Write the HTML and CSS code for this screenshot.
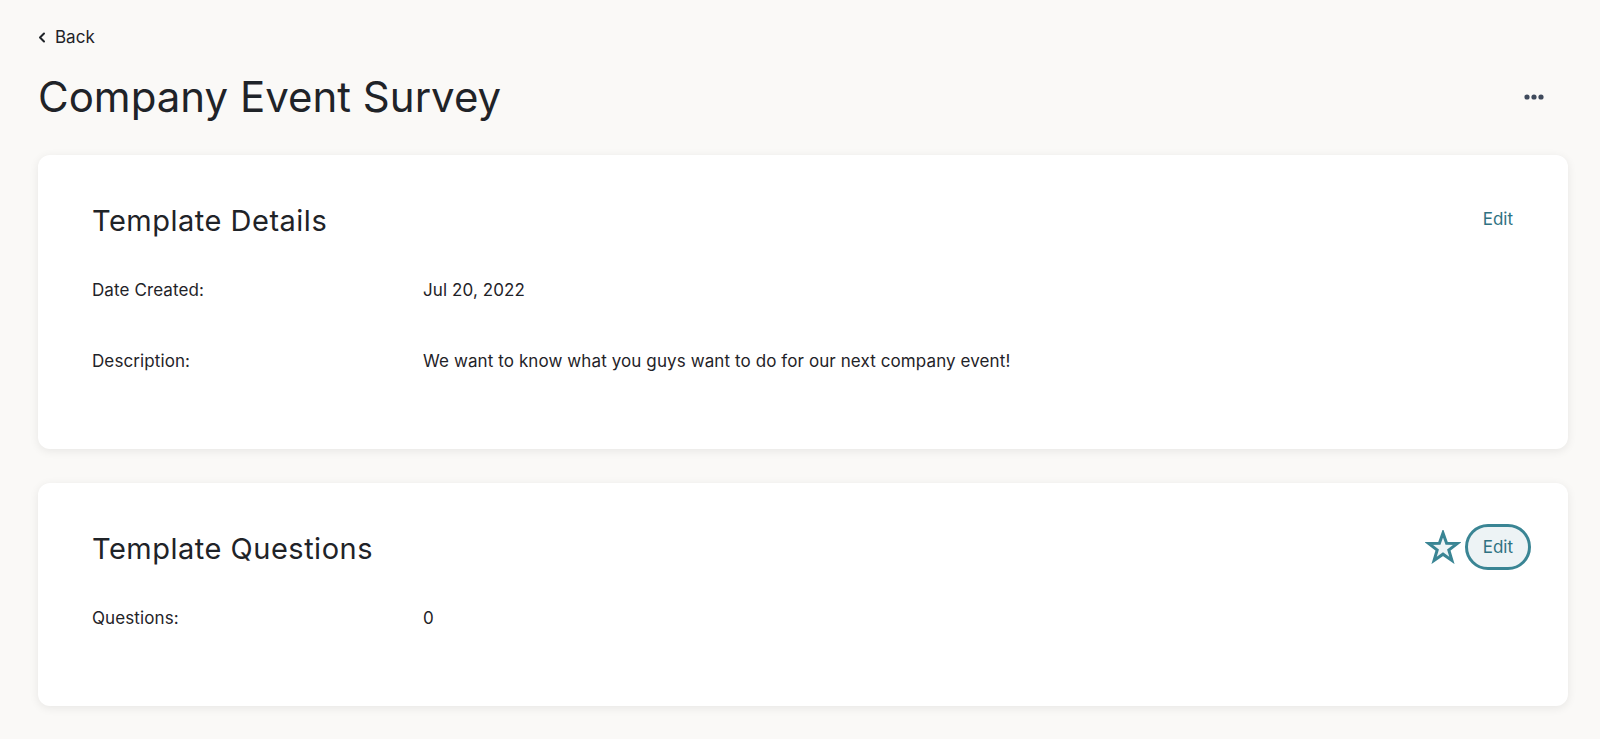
FILE: index.html
```html
<!DOCTYPE html>
<html lang="en">
<head>
  <meta charset="UTF-8" />
  <meta name="viewport" content="width=device-width, initial-scale=1.0"/>
  <title>Company Event Survey</title>
  <link rel="stylesheet" href="styles.css">
</head>
<body>
  <div class="page">
    <a class="back" href="#">
      <svg width="8" height="11" viewBox="0 0 8 11"><path d="M6 1.5 L2 5.5 L6 9.5" fill="none" stroke="#1f2328" stroke-width="2" stroke-linecap="round" stroke-linejoin="round"/></svg>
      Back
    </a>

    <div class="page-head">
      <h1>Company Event Survey</h1>
      <button class="more" aria-label="More">
        <svg width="20" height="6" viewBox="0 0 20 6">
          <circle cx="3" cy="3" r="2.6" fill="#3f4a5c"/>
          <circle cx="10" cy="3" r="2.6" fill="#3f4a5c"/>
          <circle cx="17" cy="3" r="2.6" fill="#3f4a5c"/>
        </svg>
      </button>
    </div>

    <section class="card">
      <div class="card-head">
        <h2>Template Details</h2>
        <div class="actions">
          <button class="edit">Edit</button>
        </div>
      </div>
      <div class="fields">
        <div class="field">
          <span class="label">Date Created:</span>
          <span class="value">Jul 20, 2022</span>
        </div>
        <div class="field">
          <span class="label">Description:</span>
          <span class="value">We want to know what you guys want to do for our next company event!</span>
        </div>
      </div>
    </section>

    <section class="card">
      <div class="card-head">
        <h2>Template Questions</h2>
        <div class="actions">
          <svg class="star" width="36" height="34" viewBox="0 0 36 34">
            <path d="M18 3 L21.6 13.2 L32.4 13.4 L23.8 20 L26.9 30.4 L18 24.2 L9.1 30.4 L12.2 20 L3.6 13.4 L14.4 13.2 Z" fill="#eef4f6" stroke="#3a8594" stroke-width="3" stroke-linejoin="miter"/>
          </svg>
          <button class="edit focused">Edit</button>
        </div>
      </div>
      <div class="fields">
        <div class="field">
          <span class="label">Questions:</span>
          <span class="value">0</span>
        </div>
      </div>
    </section>
  </div>
</body>
</html>
```

FILE: styles.css
```css
body {
  margin: 0;
  background: #faf9f7;
  font-family: Inter, "Noto Sans", sans-serif;
  color: #1f2328;
}
.page {
  padding: 25px 32px 30px 38px;
}
.back {
  display: inline-flex;
  align-items: center;
  gap: 9px;
  font-size: 17px;
  line-height: 24px;
  color: #1f2328;
  text-decoration: none;
}
.page-head {
  display: flex;
  align-items: center;
  justify-content: space-between;
  margin-top: 24px;
  margin-bottom: 34px;
}
h1 {
  margin: 0;
  font-size: 42px;
  line-height: 48px;
  font-weight: 400;
}
.more {
  background: none;
  border: none;
  padding: 0;
  margin-right: 24px;
  display: flex;
}
.card {
  background: #fff;
  border-radius: 12px;
  box-shadow: 0 2px 10px rgba(0, 0, 0, 0.08);
  padding: 42px 37px 76px 54px;
  margin-bottom: 34px;
}
.card-head {
  display: flex;
  align-items: center;
  justify-content: space-between;
  min-height: 48px;
}
h2 {
  margin: 0;
  font-size: 29px;
  line-height: 36px;
  font-weight: 400;
  letter-spacing: 0.5px;
}
.actions {
  display: flex;
  align-items: center;
  gap: 4px;
  margin-top: -4px;
}
.edit {
  font-family: inherit;
  font-size: 17px;
  line-height: 24px;
  color: #2f7282;
  background: transparent;
  border: 3px solid transparent;
  border-radius: 24px;
  padding: 8px 15px;
}
.edit.focused {
  background: #edf3f5;
  border-color: #3a8594;
}
.fields {
  margin-top: 33px;
  display: flex;
  flex-direction: column;
  gap: 47px;
}
.field {
  display: flex;
  font-size: 17px;
  line-height: 24px;
  letter-spacing: 0.1px;
}
.label {
  width: 331px;
  flex-shrink: 0;
}
```
